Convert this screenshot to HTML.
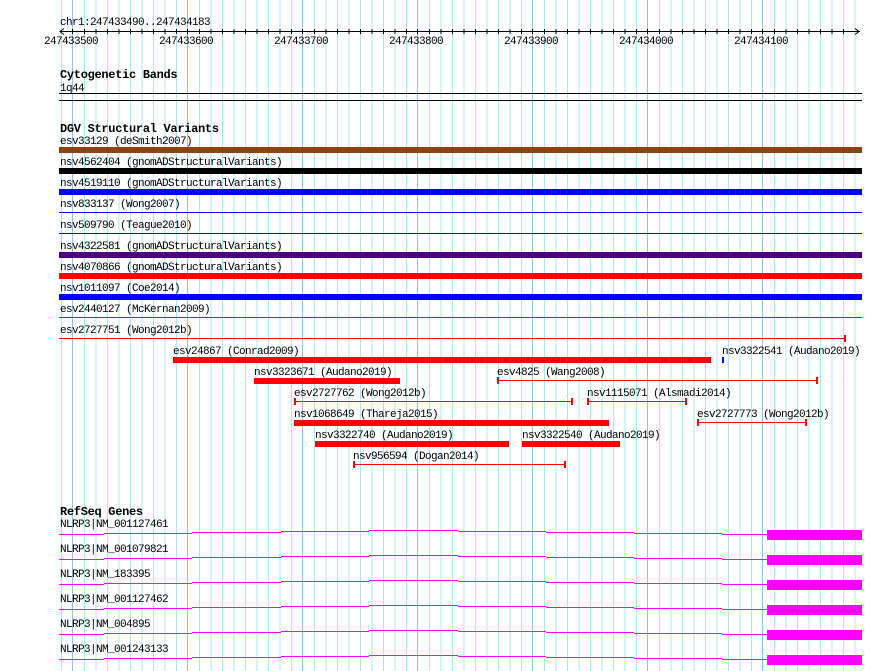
<!DOCTYPE html>
<html><head><meta charset="utf-8"><style>
html,body{margin:0;padding:0;background:#fff;width:890px;height:671px;overflow:hidden}
svg{display:block}
text{font-family:"Liberation Mono",monospace;font-size:11px;letter-spacing:-0.6px;fill:#000}
.b{font-weight:bold;font-size:12px;letter-spacing:-0.3px}
</style></head><body>
<svg width="890" height="671" xmlns="http://www.w3.org/2000/svg">
<defs>
<g id="gm">
<path d="M59 534.5H104M104 533.5H192M192 532.5H281M281 531.5H369M369 530.5H458M458 531.5H546M546 532.5H634M634 533.5H722M722 534.5H767" stroke="#ff00ff" fill="none"/>
<rect x="767" y="530" width="95" height="10" fill="#ff00ff"/>
</g>
</defs>
<rect width="890" height="671" fill="#fff"/>
<g stroke="#a8e8ee" stroke-width="1">
<path d="M61.5 0V671M84.5 0V671M96 0V671M107.5 0V671M119 0V671M130.5 0V671M142 0V671M153.5 0V671M165 0V671M176.5 0V671M199.5 0V671M211 0V671M222.5 0V671M234 0V671M245.5 0V671M257 0V671M268.5 0V671M280 0V671M291.5 0V671M314.5 0V671M326 0V671M337.5 0V671M349 0V671M360.5 0V671M372 0V671M383.5 0V671M395 0V671M406.5 0V671M429.5 0V671M441 0V671M452.5 0V671M464 0V671M475.5 0V671M487 0V671M498.5 0V671M510 0V671M521.5 0V671M544.5 0V671M556 0V671M567.5 0V671M579 0V671M590.5 0V671M602 0V671M613.5 0V671M625 0V671M636.5 0V671M659.5 0V671M671 0V671M682.5 0V671M694 0V671M705.5 0V671M717 0V671M728.5 0V671M740 0V671M751.5 0V671M774.5 0V671M786 0V671M797.5 0V671M809 0V671M820.5 0V671M832 0V671M843.5 0V671M855 0V671"/>
</g>
<g stroke="#8cc4ec" stroke-width="1">
<path d="M72.5 0V671M187.5 0V671M302.5 0V671M417.5 0V671M532.5 0V671M647.5 0V671M762.5 0V671"/>
</g>

<text x="60" y="25">chr1:247433490..247434183</text>
<path d="M60 31.5H860M855 28.5L859 31.5L855 34.5M64 28.5L60 31.5L64 34.5" stroke="#000" fill="none" stroke-width="1"/>
<g stroke="#000">
<path d="M72.5 29V34M84.5 29V34M96 29V34M107.5 29V34M119 29V34M130.5 29V34M142 29V34M153.5 29V34M165 29V34M176.5 29V34M187.5 29V34M199.5 29V34M211 29V34M222.5 29V34M234 29V34M245.5 29V34M257 29V34M268.5 29V34M280 29V34M291.5 29V34M302.5 29V34M314.5 29V34M326 29V34M337.5 29V34M349 29V34M360.5 29V34M372 29V34M383.5 29V34M395 29V34M406.5 29V34M417.5 29V34M429.5 29V34M441 29V34M452.5 29V34M464 29V34M475.5 29V34M487 29V34M498.5 29V34M510 29V34M521.5 29V34M532.5 29V34M544.5 29V34M556 29V34M567.5 29V34M579 29V34M590.5 29V34M602 29V34M613.5 29V34M625 29V34M636.5 29V34M647.5 29V34M659.5 29V34M671 29V34M682.5 29V34M694 29V34M705.5 29V34M717 29V34M728.5 29V34M740 29V34M751.5 29V34M762.5 29V34M774.5 29V34M786 29V34M797.5 29V34M809 29V34M820.5 29V34M832 29V34M843.5 29V34"/>
</g>
<g text-anchor="middle">
<text x="71" y="44">247433500</text><text x="186" y="44">247433600</text><text x="301" y="44">247433700</text><text x="416" y="44">247433800</text><text x="531" y="44">247433900</text><text x="646" y="44">247434000</text><text x="761" y="44">247434100</text>
</g>

<text class="b" x="60" y="78">Cytogenetic Bands</text>
<text x="60" y="91">1q44</text>
<rect x="59" y="93" width="803" height="1" fill="#000"/>
<rect x="59" y="100" width="803" height="1" fill="#000"/>

<text class="b" x="60" y="132">DGV Structural Variants</text>
<text x="60" y="144">esv33129 (deSmith2007)</text>
<rect x="59" y="147" width="803" height="6" fill="#8b4513"/>
<text x="60" y="165">nsv4562404 (gnomADStructuralVariants)</text>
<rect x="59" y="168" width="803" height="6" fill="#000"/>
<text x="60" y="186">nsv4519110 (gnomADStructuralVariants)</text>
<rect x="59" y="189" width="803" height="6" fill="#0000ff"/>
<text x="60" y="207">nsv833137 (Wong2007)</text>
<rect x="59" y="212" width="803" height="1" fill="#0000ff"/>
<text x="60" y="228">nsv509790 (Teague2010)</text>
<rect x="59" y="233" width="803" height="1" fill="#0000ff"/>
<text x="60" y="249">nsv4322581 (gnomADStructuralVariants)</text>
<rect x="59" y="252" width="803" height="6" fill="#4b0082"/>
<text x="60" y="270">nsv4070866 (gnomADStructuralVariants)</text>
<rect x="59" y="273" width="803" height="6" fill="#ff0000"/>
<text x="60" y="291">nsv1011097 (Coe2014)</text>
<rect x="59" y="294" width="803" height="6" fill="#0000ff"/>
<text x="60" y="312">esv2440127 (McKernan2009)</text>
<rect x="59" y="317" width="803" height="1" fill="#ff0000"/>
<text x="60" y="333">esv2727751 (Wong2012b)</text>
<rect x="59" y="338" width="786" height="1" fill="#ff0000"/>
<rect x="844" y="335" width="2" height="7" fill="#ff0000"/>

<text x="173" y="354">esv24867 (Conrad2009)</text>
<rect x="173" y="357" width="538" height="6" fill="#ff0000"/>
<text x="722" y="354">nsv3322541 (Audano2019)</text>
<rect x="722" y="357" width="2" height="6" fill="#0000ff"/>

<text x="254" y="375">nsv3323671 (Audano2019)</text>
<rect x="254" y="378" width="146" height="6" fill="#ff0000"/>
<text x="497" y="375">esv4825 (Wang2008)</text>
<rect x="497" y="380" width="321" height="1" fill="#ff0000"/>
<rect x="497" y="377" width="2" height="7" fill="#ff0000"/><rect x="816" y="377" width="2" height="7" fill="#ff0000"/>

<text x="294" y="396">esv2727762 (Wong2012b)</text>
<rect x="294" y="401" width="278" height="1" fill="#ff0000"/>
<rect x="294" y="398" width="2" height="7" fill="#ff0000"/><rect x="571" y="398" width="2" height="7" fill="#ff0000"/>
<text x="587" y="396">nsv1115071 (Alsmadi2014)</text>
<rect x="587" y="401" width="99" height="1" fill="#ff0000"/>
<rect x="587" y="398" width="2" height="7" fill="#ff0000"/><rect x="685" y="398" width="2" height="7" fill="#ff0000"/>

<text x="294" y="417">nsv1068649 (Thareja2015)</text>
<rect x="294" y="420" width="315" height="6" fill="#ff0000"/>
<text x="697" y="417">esv2727773 (Wong2012b)</text>
<rect x="697" y="422" width="109" height="1" fill="#ff0000"/>
<rect x="697" y="419" width="2" height="7" fill="#ff0000"/><rect x="805" y="419" width="2" height="7" fill="#ff0000"/>

<text x="315" y="438">nsv3322740 (Audano2019)</text>
<rect x="315" y="441" width="194" height="6" fill="#ff0000"/>
<text x="522" y="438">nsv3322540 (Audano2019)</text>
<rect x="522" y="441" width="98" height="6" fill="#ff0000"/>

<text x="353" y="459">nsv956594 (Dogan2014)</text>
<rect x="353" y="464" width="212" height="1" fill="#ff0000"/>
<rect x="353" y="461" width="2" height="7" fill="#ff0000"/><rect x="564" y="461" width="2" height="7" fill="#ff0000"/>

<text class="b" x="60" y="515">RefSeq Genes</text>
<text x="60" y="527">NLRP3|NM_001127461</text>
<use href="#gm"/>
<text x="60" y="552">NLRP3|NM_001079821</text>
<use href="#gm" transform="translate(0,25)"/>
<text x="60" y="577">NLRP3|NM_183395</text>
<use href="#gm" transform="translate(0,50)"/>
<text x="60" y="602">NLRP3|NM_001127462</text>
<use href="#gm" transform="translate(0,75)"/>
<text x="60" y="627">NLRP3|NM_004895</text>
<use href="#gm" transform="translate(0,100)"/>
<text x="60" y="652">NLRP3|NM_001243133</text>
<use href="#gm" transform="translate(0,125)"/>
</svg>
</body></html>
